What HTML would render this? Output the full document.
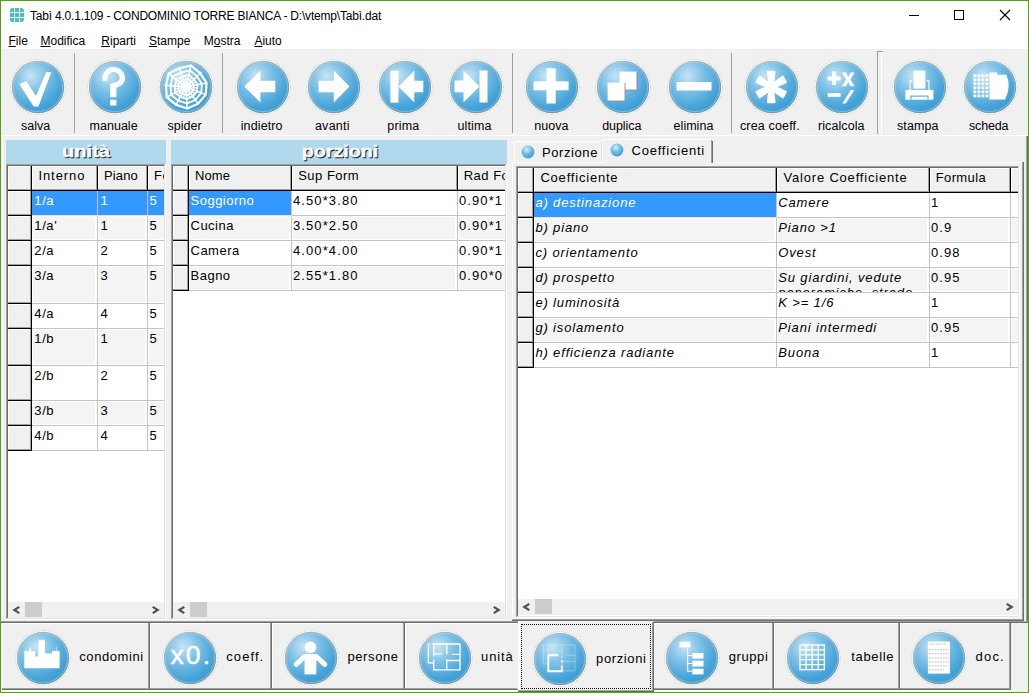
<!DOCTYPE html>
<html><head><meta charset="utf-8"><style>
html,body{margin:0;padding:0}
body{width:1029px;height:693px;position:relative;overflow:hidden;background:#f0f0f0;font-family:"Liberation Sans", sans-serif;color:#000}
.a{position:absolute}
.t{white-space:pre}
</style></head><body>
<div class="a" style="left:0px;top:0px;width:1029px;height:49px;background:#fff"></div><svg class="a" style="left:10px;top:8px" width="14" height="14" viewBox="0 0 14 14">
<rect x="0" y="0" width="14" height="14" rx="3" fill="#4dbcbc"/>
<g stroke="#e6f6f6" stroke-width="1"><line x1="4.5" y1="0" x2="4.5" y2="14"/><line x1="9.5" y1="0" x2="9.5" y2="14"/><line x1="0" y1="4.5" x2="14" y2="4.5"/><line x1="0" y1="9.5" x2="14" y2="9.5"/></g>
</svg><div class="a t" style="left:30.00px;top:9.84px;font-size:12px;line-height:12px;color:#000;;letter-spacing:-0.200px">Tabì 4.0.1.109 - CONDOMINIO TORRE BIANCA - D:\vtemp\Tabì.dat</div><div class="a" style="left:909px;top:15px;width:10px;height:1px;background:#000"></div><div class="a" style="left:954px;top:10px;width:10px;height:10px;border:1px solid #000;box-sizing:border-box"></div><svg class="a" style="left:999px;top:9px" width="12" height="12" viewBox="0 0 12 12"><path d="M1 1L11 11M11 1L1 11" stroke="#000" stroke-width="1.1"/></svg><div class="a t" style="left:8.50px;top:34.84px;font-size:12px;line-height:12px;color:#000;"><u>F</u>ile</div><div class="a t" style="left:40.50px;top:34.84px;font-size:12px;line-height:12px;color:#000;"><u>M</u>odifica</div><div class="a t" style="left:101.30px;top:34.84px;font-size:12px;line-height:12px;color:#000;"><u>R</u>iparti</div><div class="a t" style="left:149.00px;top:34.84px;font-size:12px;line-height:12px;color:#000;"><u>S</u>tampe</div><div class="a t" style="left:203.80px;top:34.84px;font-size:12px;line-height:12px;color:#000;">M<u>o</u>stra</div><div class="a t" style="left:254.40px;top:34.84px;font-size:12px;line-height:12px;color:#000;"><u>A</u>iuto</div><svg width="0" height="0" style="position:absolute"><defs>
<radialGradient id="gb" cx="0.36" cy="0.28" r="0.78">
<stop offset="0" stop-color="#c6e4f4"/><stop offset="0.4" stop-color="#7cc0e6"/><stop offset="0.8" stop-color="#45a3d8"/><stop offset="1" stop-color="#3a9cd4"/>
</radialGradient>
<linearGradient id="gr" x1="0.2" y1="0" x2="0.8" y2="1"><stop offset="0" stop-color="#b8b8b8"/><stop offset="1" stop-color="#8a8a8a"/></linearGradient>
<radialGradient id="gs" cx="0.4" cy="0.3" r="0.7">
<stop offset="0" stop-color="#d6eef9"/><stop offset="0.5" stop-color="#72bde3"/><stop offset="1" stop-color="#3f9fd2"/>
</radialGradient>
</defs></svg><svg class="a" style="left:7.70px;top:57.40px" width="60" height="60" viewBox="-30.0 -30.0 60 60">
<circle r="27.1" fill="none" stroke="#a6dcdf" stroke-width="1.1" stroke-dasharray="1.6 1.4"/>
<circle r="26.3" fill="none" stroke="#fdfefe" stroke-width="1.2"/>
<circle r="25.6" fill="url(#gb)" stroke="url(#gr)" stroke-width="1.1"/>
<circle r="24.6" fill="none" stroke="#a8d6ee" stroke-width="0.9" opacity="0.6"/>
<g fill="#fff"><path d="M-18.7 -3L-11.8 -6.1L-2 9.1L8.2 -15.1L13.4 -15.1L0.4 19.5L-4.4 19.5Z"/></g>
</svg><div class="a t" style="left:-14.40px;width:100px;text-align:center;top:119.92px;font-size:12.5px;line-height:12.5px;color:#000;;letter-spacing:-0.037px">salva</div><svg class="a" style="left:84.60px;top:57.40px" width="60" height="60" viewBox="-30.0 -30.0 60 60">
<circle r="27.1" fill="none" stroke="#a6dcdf" stroke-width="1.1" stroke-dasharray="1.6 1.4"/>
<circle r="26.3" fill="none" stroke="#fdfefe" stroke-width="1.2"/>
<circle r="25.6" fill="url(#gb)" stroke="url(#gr)" stroke-width="1.1"/>
<circle r="24.6" fill="none" stroke="#a8d6ee" stroke-width="0.9" opacity="0.6"/>
<g fill="#fff"><path d="M-12.6 -6.3L-12.6 -8.8A11.3 11.3 0 0 1 10 -8.8C10 -4 7 -1.5 1.4 0.8L1.4 10.2L-4.8 10.2L-4.8 -3.2C0 -4.6 4.7 -5.6 4.7 -8.8A6.15 6.15 0 0 0 -7.6 -8.8L-7.6 -6.3Z"/><rect x="-4.8" y="12.7" width="6.2" height="5.8"/></g>
</svg><div class="a t" style="left:63.60px;width:100px;text-align:center;top:119.92px;font-size:12.5px;line-height:12.5px;color:#000;;letter-spacing:0.007px">manuale</div><svg class="a" style="left:155.60px;top:57.40px" width="60" height="60" viewBox="-30.0 -30.0 60 60">
<circle r="27.1" fill="none" stroke="#a6dcdf" stroke-width="1.1" stroke-dasharray="1.6 1.4"/>
<circle r="26.3" fill="none" stroke="#fdfefe" stroke-width="1.2"/>
<circle r="25.6" fill="url(#gb)" stroke="url(#gr)" stroke-width="1.1"/>
<circle r="24.6" fill="none" stroke="#a8d6ee" stroke-width="0.9" opacity="0.6"/>
<g fill="#fff"><polygon points="20.58,-4.17 19.74,7.68 12.14,16.70 1.23,21.48 -9.99,17.70 -19.30,10.18 -19.98,-1.71 -17.47,-13.47 -6.68,-18.70 5.03,-21.63 14.17,-13.77" fill="none" stroke="#fff" stroke-width="2.2"/><polygon points="15.88,-3.22 15.22,5.93 9.36,12.89 0.95,16.57 -7.71,13.65 -14.89,7.86 -15.41,-1.32 -13.47,-10.39 -5.15,-14.43 3.88,-16.68 10.93,-10.62" fill="none" stroke="#fff" stroke-width="1.8"/><polygon points="11.56,-2.34 11.09,4.32 6.82,9.39 0.69,12.07 -5.61,9.94 -10.84,5.72 -11.23,-0.96 -9.81,-7.57 -3.75,-10.51 2.83,-12.15 7.96,-7.74" fill="none" stroke="#fff" stroke-width="1.8"/><polygon points="7.84,-1.59 7.52,2.93 4.62,6.36 0.47,8.18 -3.81,6.74 -7.35,3.88 -7.61,-0.65 -6.65,-5.13 -2.54,-7.13 1.92,-8.24 5.40,-5.25" fill="none" stroke="#fff" stroke-width="1.8"/><polygon points="4.90,-0.99 4.70,1.83 2.89,3.98 0.29,5.12 -2.38,4.21 -4.59,2.42 -4.76,-0.41 -4.16,-3.21 -1.59,-4.45 1.20,-5.15 3.37,-3.28" fill="none" stroke="#fff" stroke-width="1.8"/><line x1="0" y1="0" x2="21.07" y2="-4.27" stroke="#fff" stroke-width="1.6"/><line x1="0" y1="0" x2="20.04" y2="7.80" stroke="#fff" stroke-width="1.6"/><line x1="0" y1="0" x2="12.64" y2="17.39" stroke="#fff" stroke-width="1.6"/><line x1="0" y1="0" x2="1.23" y2="21.46" stroke="#fff" stroke-width="1.6"/><line x1="0" y1="0" x2="-10.57" y2="18.72" stroke="#fff" stroke-width="1.6"/><line x1="0" y1="0" x2="-19.01" y2="10.03" stroke="#fff" stroke-width="1.6"/><line x1="0" y1="0" x2="-21.42" y2="-1.84" stroke="#fff" stroke-width="1.6"/><line x1="0" y1="0" x2="-17.03" y2="-13.13" stroke="#fff" stroke-width="1.6"/><line x1="0" y1="0" x2="-7.23" y2="-20.25" stroke="#fff" stroke-width="1.6"/><line x1="0" y1="0" x2="4.87" y2="-20.94" stroke="#fff" stroke-width="1.6"/><line x1="0" y1="0" x2="15.42" y2="-14.99" stroke="#fff" stroke-width="1.6"/><circle r="4.5" fill="#fff"/><line x1="6.48" y1="0.56" x2="10.96" y2="0.94" stroke="#fff" stroke-width="1.3"/><line x1="5.15" y1="3.97" x2="8.71" y2="6.72" stroke="#fff" stroke-width="1.3"/><line x1="2.18" y1="6.12" x2="3.70" y2="10.36" stroke="#fff" stroke-width="1.3"/><line x1="-1.47" y1="6.33" x2="-2.49" y2="10.71" stroke="#fff" stroke-width="1.3"/><line x1="-4.66" y1="4.53" x2="-7.89" y2="7.67" stroke="#fff" stroke-width="1.3"/><line x1="-6.37" y1="1.29" x2="-10.78" y2="2.19" stroke="#fff" stroke-width="1.3"/><line x1="-6.06" y1="-2.36" x2="-10.25" y2="-3.99" stroke="#fff" stroke-width="1.3"/><line x1="-3.82" y1="-5.26" x2="-6.47" y2="-8.90" stroke="#fff" stroke-width="1.3"/><line x1="-0.37" y1="-6.49" x2="-0.63" y2="-10.98" stroke="#fff" stroke-width="1.3"/><line x1="3.20" y1="-5.66" x2="5.41" y2="-9.58" stroke="#fff" stroke-width="1.3"/><line x1="5.75" y1="-3.03" x2="9.73" y2="-5.13" stroke="#fff" stroke-width="1.3"/></g>
</svg><div class="a t" style="left:134.60px;width:100px;text-align:center;top:119.92px;font-size:12.5px;line-height:12.5px;color:#000;;letter-spacing:-0.008px">spider</div><svg class="a" style="left:232.50px;top:57.40px" width="60" height="60" viewBox="-30.0 -30.0 60 60">
<circle r="27.1" fill="none" stroke="#a6dcdf" stroke-width="1.1" stroke-dasharray="1.6 1.4"/>
<circle r="26.3" fill="none" stroke="#fdfefe" stroke-width="1.2"/>
<circle r="25.6" fill="url(#gb)" stroke="url(#gr)" stroke-width="1.1"/>
<circle r="24.6" fill="none" stroke="#a8d6ee" stroke-width="0.9" opacity="0.6"/>
<g fill="#fff"><path d="M-18.7 -0.5L-2.6 -16.4L-2.6 -6.3L12.3 -6.3L12.3 5.3L-2.6 5.3L-2.6 15.6Z"/></g>
</svg><div class="a t" style="left:211.70px;width:100px;text-align:center;top:119.92px;font-size:12.5px;line-height:12.5px;color:#000;;letter-spacing:0.125px">indietro</div><svg class="a" style="left:303.60px;top:57.40px" width="60" height="60" viewBox="-30.0 -30.0 60 60">
<circle r="27.1" fill="none" stroke="#a6dcdf" stroke-width="1.1" stroke-dasharray="1.6 1.4"/>
<circle r="26.3" fill="none" stroke="#fdfefe" stroke-width="1.2"/>
<circle r="25.6" fill="url(#gb)" stroke="url(#gr)" stroke-width="1.1"/>
<circle r="24.6" fill="none" stroke="#a8d6ee" stroke-width="0.9" opacity="0.6"/>
<g fill="#fff"><path d="M15.5 -0.5L-0.2 -16.4L-0.2 -6.2L-15.4 -6.2L-15.4 5.3L-0.2 5.3L-0.2 15.6Z"/></g>
</svg><div class="a t" style="left:282.40px;width:100px;text-align:center;top:119.92px;font-size:12.5px;line-height:12.5px;color:#000;;letter-spacing:0.273px">avanti</div><svg class="a" style="left:374.50px;top:57.40px" width="60" height="60" viewBox="-30.0 -30.0 60 60">
<circle r="27.1" fill="none" stroke="#a6dcdf" stroke-width="1.1" stroke-dasharray="1.6 1.4"/>
<circle r="26.3" fill="none" stroke="#fdfefe" stroke-width="1.2"/>
<circle r="25.6" fill="url(#gb)" stroke="url(#gr)" stroke-width="1.1"/>
<circle r="24.6" fill="none" stroke="#a8d6ee" stroke-width="0.9" opacity="0.6"/>
<g fill="#fff"><rect x="-14.6" y="-16.4" width="8.1" height="32"/><path d="M-6.5 -0.5L9.3 -16.4L9.3 -6.3L18.3 -6.3L18.3 5.3L9.3 5.3L9.3 15.6Z"/></g>
</svg><div class="a t" style="left:353.30px;width:100px;text-align:center;top:119.92px;font-size:12.5px;line-height:12.5px;color:#000;;letter-spacing:0.147px">prima</div><svg class="a" style="left:445.60px;top:57.40px" width="60" height="60" viewBox="-30.0 -30.0 60 60">
<circle r="27.1" fill="none" stroke="#a6dcdf" stroke-width="1.1" stroke-dasharray="1.6 1.4"/>
<circle r="26.3" fill="none" stroke="#fdfefe" stroke-width="1.2"/>
<circle r="25.6" fill="url(#gb)" stroke="url(#gr)" stroke-width="1.1"/>
<circle r="24.6" fill="none" stroke="#a8d6ee" stroke-width="0.9" opacity="0.6"/>
<g fill="#fff"><rect x="3.5" y="-16.5" width="8" height="32"/><path d="M3.5 -0.5L-12.5 -16.5L-12.5 -6.4L-21.5 -6.4L-21.5 5.3L-12.5 5.3L-12.5 15.5Z"/></g>
</svg><div class="a t" style="left:424.50px;width:100px;text-align:center;top:119.92px;font-size:12.5px;line-height:12.5px;color:#000;;letter-spacing:0.109px">ultima</div><svg class="a" style="left:522.20px;top:57.40px" width="60" height="60" viewBox="-30.0 -30.0 60 60">
<circle r="27.1" fill="none" stroke="#a6dcdf" stroke-width="1.1" stroke-dasharray="1.6 1.4"/>
<circle r="26.3" fill="none" stroke="#fdfefe" stroke-width="1.2"/>
<circle r="25.6" fill="url(#gb)" stroke="url(#gr)" stroke-width="1.1"/>
<circle r="24.6" fill="none" stroke="#a8d6ee" stroke-width="0.9" opacity="0.6"/>
<g fill="#fff"><rect x="-5.55" y="-18.7" width="9.25" height="35.2"/><rect x="-18.5" y="-5.7" width="35.1" height="9"/></g>
</svg><div class="a t" style="left:501.40px;width:100px;text-align:center;top:119.92px;font-size:12.5px;line-height:12.5px;color:#000;;letter-spacing:0.087px">nuova</div><svg class="a" style="left:593.40px;top:57.40px" width="60" height="60" viewBox="-30.0 -30.0 60 60">
<circle r="27.1" fill="none" stroke="#a6dcdf" stroke-width="1.1" stroke-dasharray="1.6 1.4"/>
<circle r="26.3" fill="none" stroke="#fdfefe" stroke-width="1.2"/>
<circle r="25.6" fill="url(#gb)" stroke="url(#gr)" stroke-width="1.1"/>
<circle r="24.6" fill="none" stroke="#a8d6ee" stroke-width="0.9" opacity="0.6"/>
<g fill="#fff"><rect x="-3" y="-15" width="17.5" height="18.5" fill="#8a8f94"/><rect x="-3.5" y="-15.4" width="17" height="18" fill="#fff"/><rect x="-15" y="-4" width="17.5" height="18.5" fill="#8a8f94"/><rect x="-15.4" y="-4.4" width="17" height="18" fill="#fff"/></g>
</svg><div class="a t" style="left:571.80px;width:100px;text-align:center;top:119.92px;font-size:12.5px;line-height:12.5px;color:#000;;letter-spacing:-0.046px">duplica</div><svg class="a" style="left:664.50px;top:57.40px" width="60" height="60" viewBox="-30.0 -30.0 60 60">
<circle r="27.1" fill="none" stroke="#a6dcdf" stroke-width="1.1" stroke-dasharray="1.6 1.4"/>
<circle r="26.3" fill="none" stroke="#fdfefe" stroke-width="1.2"/>
<circle r="25.6" fill="url(#gb)" stroke="url(#gr)" stroke-width="1.1"/>
<circle r="24.6" fill="none" stroke="#a8d6ee" stroke-width="0.9" opacity="0.6"/>
<g fill="#fff"><rect x="-18.5" y="-5" width="35" height="8.5"/></g>
</svg><div class="a t" style="left:643.50px;width:100px;text-align:center;top:119.92px;font-size:12.5px;line-height:12.5px;color:#000;;letter-spacing:0.027px">elimina</div><svg class="a" style="left:741.50px;top:57.40px" width="60" height="60" viewBox="-30.0 -30.0 60 60">
<circle r="27.1" fill="none" stroke="#a6dcdf" stroke-width="1.1" stroke-dasharray="1.6 1.4"/>
<circle r="26.3" fill="none" stroke="#fdfefe" stroke-width="1.2"/>
<circle r="25.6" fill="url(#gb)" stroke="url(#gr)" stroke-width="1.1"/>
<circle r="24.6" fill="none" stroke="#a8d6ee" stroke-width="0.9" opacity="0.6"/>
<g fill="#fff"><g transform="translate(-0.8 0)"><path transform="rotate(90)" d="M0 -2.6L15.2 -4.3Q16.2 -4 16.2 -3L16.2 3Q16.2 4 15.2 4.3L0 2.6Z"/><path transform="rotate(150)" d="M0 -2.6L15.2 -4.3Q16.2 -4 16.2 -3L16.2 3Q16.2 4 15.2 4.3L0 2.6Z"/><path transform="rotate(210)" d="M0 -2.6L15.2 -4.3Q16.2 -4 16.2 -3L16.2 3Q16.2 4 15.2 4.3L0 2.6Z"/><path transform="rotate(270)" d="M0 -2.6L15.2 -4.3Q16.2 -4 16.2 -3L16.2 3Q16.2 4 15.2 4.3L0 2.6Z"/><path transform="rotate(330)" d="M0 -2.6L15.2 -4.3Q16.2 -4 16.2 -3L16.2 3Q16.2 4 15.2 4.3L0 2.6Z"/><path transform="rotate(390)" d="M0 -2.6L15.2 -4.3Q16.2 -4 16.2 -3L16.2 3Q16.2 4 15.2 4.3L0 2.6Z"/><circle r="4.5"/></g></g>
</svg><div class="a t" style="left:719.90px;width:100px;text-align:center;top:119.92px;font-size:12.5px;line-height:12.5px;color:#000;;letter-spacing:0.169px">crea coeff.</div><svg class="a" style="left:812.40px;top:57.40px" width="60" height="60" viewBox="-30.0 -30.0 60 60">
<circle r="27.1" fill="none" stroke="#a6dcdf" stroke-width="1.1" stroke-dasharray="1.6 1.4"/>
<circle r="26.3" fill="none" stroke="#fdfefe" stroke-width="1.2"/>
<circle r="25.6" fill="url(#gb)" stroke="url(#gr)" stroke-width="1.1"/>
<circle r="24.6" fill="none" stroke="#a8d6ee" stroke-width="0.9" opacity="0.6"/>
<g fill="#fff"><rect x="-14.4" y="-10.5" width="13" height="4"/><rect x="-9.9" y="-15.6" width="4" height="13.6"/><path d="M-0.2 -14.4H4L6.2 -10.3L8.4 -14.4H12.6L8.4 -7.6L12.6 -0.8H8.2L6.2 -4.9L4 -0.8H-0.2L4 -7.6Z"/><rect x="-14.4" y="6.2" width="13" height="3.6"/><path d="M8.8 2.9H12.3L3.7 16.4H0.2Z"/></g>
</svg><div class="a t" style="left:791.30px;width:100px;text-align:center;top:119.92px;font-size:12.5px;line-height:12.5px;color:#000;;letter-spacing:0.082px">ricalcola</div><svg class="a" style="left:889.60px;top:57.40px" width="60" height="60" viewBox="-30.0 -30.0 60 60">
<circle r="27.1" fill="none" stroke="#a6dcdf" stroke-width="1.1" stroke-dasharray="1.6 1.4"/>
<circle r="26.3" fill="none" stroke="#fdfefe" stroke-width="1.2"/>
<circle r="25.6" fill="url(#gb)" stroke="url(#gr)" stroke-width="1.1"/>
<circle r="24.6" fill="none" stroke="#a8d6ee" stroke-width="0.9" opacity="0.6"/>
<g fill="#fff"><rect x="-6.5" y="-16.4" width="11.9" height="18"/><path d="M-10.5 -6.7H-7.6V-5.6H-9.4V2.9H-10.5Z"/><path d="M9.5 -6.7H6.6V-5.6H8.4V2.9H9.5Z"/><path d="M-14.6 2.9H13.4V12.7H-14.6Z"/><rect x="-9.5" y="8.6" width="17.5" height="1" fill="#4aa3d6"/><rect x="-9.5" y="8.6" width="1" height="4" fill="#4aa3d6"/><rect x="7.5" y="8.6" width="1" height="4" fill="#4aa3d6"/></g>
</svg><div class="a t" style="left:867.80px;width:100px;text-align:center;top:119.92px;font-size:12.5px;line-height:12.5px;color:#000;;letter-spacing:0.117px">stampa</div><svg class="a" style="left:960.40px;top:57.40px" width="60" height="60" viewBox="-30.0 -30.0 60 60">
<circle r="27.1" fill="none" stroke="#a6dcdf" stroke-width="1.1" stroke-dasharray="1.6 1.4"/>
<circle r="26.3" fill="none" stroke="#fdfefe" stroke-width="1.2"/>
<circle r="25.6" fill="url(#gb)" stroke="url(#gr)" stroke-width="1.1"/>
<circle r="24.6" fill="none" stroke="#a8d6ee" stroke-width="0.9" opacity="0.6"/>
<g fill="#fff"><g><rect x="-16.60" y="-12.70" width="2.9" height="2.9"/><rect x="-16.60" y="-8.67" width="2.9" height="2.9"/><rect x="-16.60" y="-4.64" width="2.9" height="2.9"/><rect x="-16.60" y="-0.61" width="2.9" height="2.9"/><rect x="-16.60" y="3.42" width="2.9" height="2.9"/><rect x="-16.60" y="7.45" width="2.9" height="2.9"/><rect x="-12.57" y="-12.70" width="2.9" height="2.9"/><rect x="-12.57" y="-8.67" width="2.9" height="2.9"/><rect x="-12.57" y="-4.64" width="2.9" height="2.9"/><rect x="-12.57" y="-0.61" width="2.9" height="2.9"/><rect x="-12.57" y="3.42" width="2.9" height="2.9"/><rect x="-12.57" y="7.45" width="2.9" height="2.9"/><rect x="-8.54" y="-12.70" width="2.9" height="2.9"/><rect x="-8.54" y="-8.67" width="2.9" height="2.9"/><rect x="-8.54" y="-4.64" width="2.9" height="2.9"/><rect x="-8.54" y="-0.61" width="2.9" height="2.9"/><rect x="-8.54" y="3.42" width="2.9" height="2.9"/><rect x="-8.54" y="7.45" width="2.9" height="2.9"/><rect x="-4.51" y="-12.70" width="2.9" height="2.9"/><rect x="-4.51" y="-8.67" width="2.9" height="2.9"/><rect x="-4.51" y="-4.64" width="2.9" height="2.9"/><rect x="-4.51" y="-0.61" width="2.9" height="2.9"/><rect x="-4.51" y="3.42" width="2.9" height="2.9"/><rect x="-4.51" y="7.45" width="2.9" height="2.9"/></g><path d="M-0.6 -14.4H7.4V-12.3H16.3Q21.5 -1 15.1 12.6H-0.6Z"/></g>
</svg><div class="a t" style="left:938.70px;width:100px;text-align:center;top:119.92px;font-size:12.5px;line-height:12.5px;color:#000;;letter-spacing:-0.135px">scheda</div><div class="a" style="left:74px;top:53px;width:1px;height:80px;background:#a0a0a0"></div><div class="a" style="left:222px;top:53px;width:1px;height:80px;background:#a0a0a0"></div><div class="a" style="left:512px;top:53px;width:1px;height:80px;background:#a0a0a0"></div><div class="a" style="left:731px;top:53px;width:1px;height:80px;background:#a0a0a0"></div><div class="a" style="left:877px;top:51px;width:1px;height:83px;background:#a0a0a0"></div><div class="a" style="left:877px;top:51px;width:6px;height:1px;background:#a0a0a0"></div><div class="a" style="left:881px;top:52px;width:1px;height:82px;background:#fff"></div><div class="a" style="left:1px;top:135px;width:1027px;height:1px;background:#fff"></div><div class="a" style="left:1027px;top:136px;width:1px;height:487px;background:#6e6e6e"></div><div class="a" style="left:1026px;top:136px;width:1px;height:487px;background:#a0a0a0"></div><div class="a" style="left:1px;top:621px;width:1027px;height:1px;background:#a0a0a0"></div><div class="a" style="left:1px;top:622px;width:1027px;height:1px;background:#6e6e6e"></div><div class="a" style="left:2px;top:136px;width:1px;height:485px;background:#fff"></div><div class="a" style="left:6px;top:140px;width:160px;height:24px;background:#b0d9ee"></div><div class="a t" style="left:-12.799999999999997px;width:200px;text-align:center;top:143.53px;font-size:16.5px;line-height:16.5px;font-weight:bold;color:#1a1a1a;-webkit-text-stroke:0.35px #1a1a1a;transform:scaleX(1.218);transform-origin:100px 0">unità</div><div class="a t" style="left:-13.799999999999997px;width:200px;text-align:center;top:142.53px;font-size:16.5px;line-height:16.5px;font-weight:bold;color:#fff;-webkit-text-stroke:0.35px #fff;transform:scaleX(1.218);transform-origin:100px 0">unità</div><div class="a" style="left:6px;top:164px;width:160px;height:1px;background:#a0a0a0"></div><div class="a" style="left:7px;top:165px;width:158px;height:1px;background:#6e6e6e"></div><div class="a" style="left:6px;top:164px;width:1px;height:456px;background:#a0a0a0"></div><div class="a" style="left:7px;top:165px;width:1px;height:454px;background:#6e6e6e"></div><div class="a" style="left:6px;top:619px;width:160px;height:1px;background:#fff"></div><div class="a" style="left:7px;top:618px;width:158px;height:1px;background:#e3e3e3"></div><div class="a" style="left:165px;top:164px;width:1px;height:456px;background:#fff"></div><div class="a" style="left:164px;top:165px;width:1px;height:454px;background:#e3e3e3"></div><div class="a" style="left:8px;top:166px;width:156px;height:452px;overflow:hidden"><div class="a" style="left:-8px;top:-166px;width:1029px;height:693px"><div class="a" style="left:8px;top:166px;width:156px;height:452px;background:#fff"></div><div class="a" style="left:8px;top:166px;width:23px;height:24px;background:#f0f0f0"></div><div class="a" style="left:8px;top:166px;width:23px;height:1px;background:#fff"></div><div class="a" style="left:8px;top:166px;width:1px;height:24px;background:#fff"></div><div class="a" style="left:8px;top:189px;width:23px;height:1px;background:#a0a0a0"></div><div class="a" style="left:30px;top:166px;width:1px;height:24px;background:#a0a0a0"></div><div class="a" style="left:8px;top:190px;width:24px;height:1px;background:#000"></div><div class="a" style="left:31px;top:166px;width:1px;height:25px;background:#000"></div><div class="a" style="left:32px;top:166px;width:65px;height:24px;background:#f0f0f0"></div><div class="a" style="left:32px;top:166px;width:65px;height:1px;background:#fff"></div><div class="a" style="left:32px;top:166px;width:1px;height:24px;background:#fff"></div><div class="a" style="left:32px;top:189px;width:65px;height:1px;background:#a0a0a0"></div><div class="a" style="left:96px;top:166px;width:1px;height:24px;background:#a0a0a0"></div><div class="a" style="left:32px;top:190px;width:66px;height:1px;background:#000"></div><div class="a" style="left:97px;top:166px;width:1px;height:25px;background:#000"></div><div class="a" style="left:98px;top:166px;width:49px;height:24px;background:#f0f0f0"></div><div class="a" style="left:98px;top:166px;width:49px;height:1px;background:#fff"></div><div class="a" style="left:98px;top:166px;width:1px;height:24px;background:#fff"></div><div class="a" style="left:98px;top:189px;width:49px;height:1px;background:#a0a0a0"></div><div class="a" style="left:146px;top:166px;width:1px;height:24px;background:#a0a0a0"></div><div class="a" style="left:98px;top:190px;width:50px;height:1px;background:#000"></div><div class="a" style="left:147px;top:166px;width:1px;height:25px;background:#000"></div><div class="a" style="left:148px;top:166px;width:39px;height:24px;background:#f0f0f0"></div><div class="a" style="left:148px;top:166px;width:39px;height:1px;background:#fff"></div><div class="a" style="left:148px;top:166px;width:1px;height:24px;background:#fff"></div><div class="a" style="left:148px;top:189px;width:39px;height:1px;background:#a0a0a0"></div><div class="a" style="left:186px;top:166px;width:1px;height:24px;background:#a0a0a0"></div><div class="a" style="left:148px;top:190px;width:40px;height:1px;background:#000"></div><div class="a" style="left:187px;top:166px;width:1px;height:25px;background:#000"></div><div class="a" style="left:8px;top:191px;width:23px;height:24px;background:#f0f0f0"></div><div class="a" style="left:8px;top:191px;width:23px;height:1px;background:#fff"></div><div class="a" style="left:8px;top:191px;width:1px;height:24px;background:#fff"></div><div class="a" style="left:8px;top:214px;width:23px;height:1px;background:#a0a0a0"></div><div class="a" style="left:30px;top:191px;width:1px;height:24px;background:#a0a0a0"></div><div class="a" style="left:8px;top:215px;width:24px;height:1px;background:#000"></div><div class="a" style="left:31px;top:191px;width:1px;height:25px;background:#000"></div><div class="a" style="left:32px;top:191px;width:65px;height:24px;background:#3399ff"></div><div class="a" style="left:97px;top:191px;width:1px;height:25px;background:#c4c4c4"></div><div class="a" style="left:32px;top:215px;width:66px;height:1px;background:#e6e3e0"></div><div class="a" style="left:98px;top:191px;width:49px;height:24px;background:#3399ff"></div><div class="a" style="left:147px;top:191px;width:1px;height:25px;background:#c4c4c4"></div><div class="a" style="left:98px;top:215px;width:50px;height:1px;background:#e6e3e0"></div><div class="a" style="left:148px;top:191px;width:39px;height:24px;background:#3399ff"></div><div class="a" style="left:187px;top:191px;width:1px;height:25px;background:#c4c4c4"></div><div class="a" style="left:148px;top:215px;width:40px;height:1px;background:#e6e3e0"></div><div class="a" style="left:8px;top:216px;width:23px;height:24px;background:#f0f0f0"></div><div class="a" style="left:8px;top:216px;width:23px;height:1px;background:#fff"></div><div class="a" style="left:8px;top:216px;width:1px;height:24px;background:#fff"></div><div class="a" style="left:8px;top:239px;width:23px;height:1px;background:#a0a0a0"></div><div class="a" style="left:30px;top:216px;width:1px;height:24px;background:#a0a0a0"></div><div class="a" style="left:8px;top:240px;width:24px;height:1px;background:#000"></div><div class="a" style="left:31px;top:216px;width:1px;height:25px;background:#000"></div><div class="a" style="left:33px;top:217px;width:62px;height:22px;background:#f4f4f4"></div><div class="a" style="left:97px;top:216px;width:1px;height:25px;background:#c4c4c4"></div><div class="a" style="left:32px;top:240px;width:66px;height:1px;background:#c4c4c4"></div><div class="a" style="left:99px;top:217px;width:46px;height:22px;background:#f4f4f4"></div><div class="a" style="left:147px;top:216px;width:1px;height:25px;background:#c4c4c4"></div><div class="a" style="left:98px;top:240px;width:50px;height:1px;background:#c4c4c4"></div><div class="a" style="left:149px;top:217px;width:36px;height:22px;background:#f4f4f4"></div><div class="a" style="left:187px;top:216px;width:1px;height:25px;background:#c4c4c4"></div><div class="a" style="left:148px;top:240px;width:40px;height:1px;background:#c4c4c4"></div><div class="a" style="left:8px;top:241px;width:23px;height:24px;background:#f0f0f0"></div><div class="a" style="left:8px;top:241px;width:23px;height:1px;background:#fff"></div><div class="a" style="left:8px;top:241px;width:1px;height:24px;background:#fff"></div><div class="a" style="left:8px;top:264px;width:23px;height:1px;background:#a0a0a0"></div><div class="a" style="left:30px;top:241px;width:1px;height:24px;background:#a0a0a0"></div><div class="a" style="left:8px;top:265px;width:24px;height:1px;background:#000"></div><div class="a" style="left:31px;top:241px;width:1px;height:25px;background:#000"></div><div class="a" style="left:97px;top:241px;width:1px;height:25px;background:#c4c4c4"></div><div class="a" style="left:32px;top:265px;width:66px;height:1px;background:#c4c4c4"></div><div class="a" style="left:147px;top:241px;width:1px;height:25px;background:#c4c4c4"></div><div class="a" style="left:98px;top:265px;width:50px;height:1px;background:#c4c4c4"></div><div class="a" style="left:187px;top:241px;width:1px;height:25px;background:#c4c4c4"></div><div class="a" style="left:148px;top:265px;width:40px;height:1px;background:#c4c4c4"></div><div class="a" style="left:8px;top:266px;width:23px;height:37px;background:#f0f0f0"></div><div class="a" style="left:8px;top:266px;width:23px;height:1px;background:#fff"></div><div class="a" style="left:8px;top:266px;width:1px;height:37px;background:#fff"></div><div class="a" style="left:8px;top:302px;width:23px;height:1px;background:#a0a0a0"></div><div class="a" style="left:30px;top:266px;width:1px;height:37px;background:#a0a0a0"></div><div class="a" style="left:8px;top:303px;width:24px;height:1px;background:#000"></div><div class="a" style="left:31px;top:266px;width:1px;height:38px;background:#000"></div><div class="a" style="left:33px;top:267px;width:62px;height:35px;background:#f4f4f4"></div><div class="a" style="left:97px;top:266px;width:1px;height:38px;background:#c4c4c4"></div><div class="a" style="left:32px;top:303px;width:66px;height:1px;background:#c4c4c4"></div><div class="a" style="left:99px;top:267px;width:46px;height:35px;background:#f4f4f4"></div><div class="a" style="left:147px;top:266px;width:1px;height:38px;background:#c4c4c4"></div><div class="a" style="left:98px;top:303px;width:50px;height:1px;background:#c4c4c4"></div><div class="a" style="left:149px;top:267px;width:36px;height:35px;background:#f4f4f4"></div><div class="a" style="left:187px;top:266px;width:1px;height:38px;background:#c4c4c4"></div><div class="a" style="left:148px;top:303px;width:40px;height:1px;background:#c4c4c4"></div><div class="a" style="left:8px;top:304px;width:23px;height:24px;background:#f0f0f0"></div><div class="a" style="left:8px;top:304px;width:23px;height:1px;background:#fff"></div><div class="a" style="left:8px;top:304px;width:1px;height:24px;background:#fff"></div><div class="a" style="left:8px;top:327px;width:23px;height:1px;background:#a0a0a0"></div><div class="a" style="left:30px;top:304px;width:1px;height:24px;background:#a0a0a0"></div><div class="a" style="left:8px;top:328px;width:24px;height:1px;background:#000"></div><div class="a" style="left:31px;top:304px;width:1px;height:25px;background:#000"></div><div class="a" style="left:97px;top:304px;width:1px;height:25px;background:#c4c4c4"></div><div class="a" style="left:32px;top:328px;width:66px;height:1px;background:#c4c4c4"></div><div class="a" style="left:147px;top:304px;width:1px;height:25px;background:#c4c4c4"></div><div class="a" style="left:98px;top:328px;width:50px;height:1px;background:#c4c4c4"></div><div class="a" style="left:187px;top:304px;width:1px;height:25px;background:#c4c4c4"></div><div class="a" style="left:148px;top:328px;width:40px;height:1px;background:#c4c4c4"></div><div class="a" style="left:8px;top:329px;width:23px;height:36px;background:#f0f0f0"></div><div class="a" style="left:8px;top:329px;width:23px;height:1px;background:#fff"></div><div class="a" style="left:8px;top:329px;width:1px;height:36px;background:#fff"></div><div class="a" style="left:8px;top:364px;width:23px;height:1px;background:#a0a0a0"></div><div class="a" style="left:30px;top:329px;width:1px;height:36px;background:#a0a0a0"></div><div class="a" style="left:8px;top:365px;width:24px;height:1px;background:#000"></div><div class="a" style="left:31px;top:329px;width:1px;height:37px;background:#000"></div><div class="a" style="left:33px;top:330px;width:62px;height:34px;background:#f4f4f4"></div><div class="a" style="left:97px;top:329px;width:1px;height:37px;background:#c4c4c4"></div><div class="a" style="left:32px;top:365px;width:66px;height:1px;background:#c4c4c4"></div><div class="a" style="left:99px;top:330px;width:46px;height:34px;background:#f4f4f4"></div><div class="a" style="left:147px;top:329px;width:1px;height:37px;background:#c4c4c4"></div><div class="a" style="left:98px;top:365px;width:50px;height:1px;background:#c4c4c4"></div><div class="a" style="left:149px;top:330px;width:36px;height:34px;background:#f4f4f4"></div><div class="a" style="left:187px;top:329px;width:1px;height:37px;background:#c4c4c4"></div><div class="a" style="left:148px;top:365px;width:40px;height:1px;background:#c4c4c4"></div><div class="a" style="left:8px;top:366px;width:23px;height:34px;background:#f0f0f0"></div><div class="a" style="left:8px;top:366px;width:23px;height:1px;background:#fff"></div><div class="a" style="left:8px;top:366px;width:1px;height:34px;background:#fff"></div><div class="a" style="left:8px;top:399px;width:23px;height:1px;background:#a0a0a0"></div><div class="a" style="left:30px;top:366px;width:1px;height:34px;background:#a0a0a0"></div><div class="a" style="left:8px;top:400px;width:24px;height:1px;background:#000"></div><div class="a" style="left:31px;top:366px;width:1px;height:35px;background:#000"></div><div class="a" style="left:97px;top:366px;width:1px;height:35px;background:#c4c4c4"></div><div class="a" style="left:32px;top:400px;width:66px;height:1px;background:#c4c4c4"></div><div class="a" style="left:147px;top:366px;width:1px;height:35px;background:#c4c4c4"></div><div class="a" style="left:98px;top:400px;width:50px;height:1px;background:#c4c4c4"></div><div class="a" style="left:187px;top:366px;width:1px;height:35px;background:#c4c4c4"></div><div class="a" style="left:148px;top:400px;width:40px;height:1px;background:#c4c4c4"></div><div class="a" style="left:8px;top:401px;width:23px;height:24px;background:#f0f0f0"></div><div class="a" style="left:8px;top:401px;width:23px;height:1px;background:#fff"></div><div class="a" style="left:8px;top:401px;width:1px;height:24px;background:#fff"></div><div class="a" style="left:8px;top:424px;width:23px;height:1px;background:#a0a0a0"></div><div class="a" style="left:30px;top:401px;width:1px;height:24px;background:#a0a0a0"></div><div class="a" style="left:8px;top:425px;width:24px;height:1px;background:#000"></div><div class="a" style="left:31px;top:401px;width:1px;height:25px;background:#000"></div><div class="a" style="left:33px;top:402px;width:62px;height:22px;background:#f4f4f4"></div><div class="a" style="left:97px;top:401px;width:1px;height:25px;background:#c4c4c4"></div><div class="a" style="left:32px;top:425px;width:66px;height:1px;background:#c4c4c4"></div><div class="a" style="left:99px;top:402px;width:46px;height:22px;background:#f4f4f4"></div><div class="a" style="left:147px;top:401px;width:1px;height:25px;background:#c4c4c4"></div><div class="a" style="left:98px;top:425px;width:50px;height:1px;background:#c4c4c4"></div><div class="a" style="left:149px;top:402px;width:36px;height:22px;background:#f4f4f4"></div><div class="a" style="left:187px;top:401px;width:1px;height:25px;background:#c4c4c4"></div><div class="a" style="left:148px;top:425px;width:40px;height:1px;background:#c4c4c4"></div><div class="a" style="left:8px;top:426px;width:23px;height:24px;background:#f0f0f0"></div><div class="a" style="left:8px;top:426px;width:23px;height:1px;background:#fff"></div><div class="a" style="left:8px;top:426px;width:1px;height:24px;background:#fff"></div><div class="a" style="left:8px;top:449px;width:23px;height:1px;background:#a0a0a0"></div><div class="a" style="left:30px;top:426px;width:1px;height:24px;background:#a0a0a0"></div><div class="a" style="left:8px;top:450px;width:24px;height:1px;background:#000"></div><div class="a" style="left:31px;top:426px;width:1px;height:25px;background:#000"></div><div class="a" style="left:97px;top:426px;width:1px;height:25px;background:#c4c4c4"></div><div class="a" style="left:32px;top:450px;width:66px;height:1px;background:#c4c4c4"></div><div class="a" style="left:147px;top:426px;width:1px;height:25px;background:#c4c4c4"></div><div class="a" style="left:98px;top:450px;width:50px;height:1px;background:#c4c4c4"></div><div class="a" style="left:187px;top:426px;width:1px;height:25px;background:#c4c4c4"></div><div class="a" style="left:148px;top:450px;width:40px;height:1px;background:#c4c4c4"></div><div class="a t" style="left:38.40px;top:169.00px;font-size:13px;line-height:13px;color:#000;;letter-spacing:0.931px">Interno</div><div class="a t" style="left:104.00px;top:169.00px;font-size:13px;line-height:13px;color:#000;;letter-spacing:0.150px">Piano</div><div class="a t" style="left:154.00px;top:169.00px;font-size:13px;line-height:13px;color:#000;letter-spacing:0.6px">Fo</div><div class="a t" style="left:34.30px;top:194.00px;font-size:13px;line-height:13px;color:#fff;letter-spacing:0.6px">1/a</div><div class="a t" style="left:100.50px;top:194.00px;font-size:13px;line-height:13px;color:#fff;">1</div><div class="a t" style="left:149.50px;top:194.00px;font-size:13px;line-height:13px;color:#fff;">5</div><div class="a t" style="left:34.30px;top:219.00px;font-size:13px;line-height:13px;color:#000;letter-spacing:0.6px">1/a'</div><div class="a t" style="left:100.50px;top:219.00px;font-size:13px;line-height:13px;color:#000;">1</div><div class="a t" style="left:149.50px;top:219.00px;font-size:13px;line-height:13px;color:#000;">5</div><div class="a t" style="left:34.30px;top:244.00px;font-size:13px;line-height:13px;color:#000;letter-spacing:0.6px">2/a</div><div class="a t" style="left:100.50px;top:244.00px;font-size:13px;line-height:13px;color:#000;">2</div><div class="a t" style="left:149.50px;top:244.00px;font-size:13px;line-height:13px;color:#000;">5</div><div class="a t" style="left:34.30px;top:269.00px;font-size:13px;line-height:13px;color:#000;letter-spacing:0.6px">3/a</div><div class="a t" style="left:100.50px;top:269.00px;font-size:13px;line-height:13px;color:#000;">3</div><div class="a t" style="left:149.50px;top:269.00px;font-size:13px;line-height:13px;color:#000;">5</div><div class="a t" style="left:34.30px;top:307.00px;font-size:13px;line-height:13px;color:#000;letter-spacing:0.6px">4/a</div><div class="a t" style="left:100.50px;top:307.00px;font-size:13px;line-height:13px;color:#000;">4</div><div class="a t" style="left:149.50px;top:307.00px;font-size:13px;line-height:13px;color:#000;">5</div><div class="a t" style="left:34.30px;top:332.00px;font-size:13px;line-height:13px;color:#000;letter-spacing:0.6px">1/b</div><div class="a t" style="left:100.50px;top:332.00px;font-size:13px;line-height:13px;color:#000;">1</div><div class="a t" style="left:149.50px;top:332.00px;font-size:13px;line-height:13px;color:#000;">5</div><div class="a t" style="left:34.30px;top:369.00px;font-size:13px;line-height:13px;color:#000;letter-spacing:0.6px">2/b</div><div class="a t" style="left:100.50px;top:369.00px;font-size:13px;line-height:13px;color:#000;">2</div><div class="a t" style="left:149.50px;top:369.00px;font-size:13px;line-height:13px;color:#000;">5</div><div class="a t" style="left:34.30px;top:404.00px;font-size:13px;line-height:13px;color:#000;letter-spacing:0.6px">3/b</div><div class="a t" style="left:100.50px;top:404.00px;font-size:13px;line-height:13px;color:#000;">3</div><div class="a t" style="left:149.50px;top:404.00px;font-size:13px;line-height:13px;color:#000;">5</div><div class="a t" style="left:34.30px;top:429.00px;font-size:13px;line-height:13px;color:#000;letter-spacing:0.6px">4/b</div><div class="a t" style="left:100.50px;top:429.00px;font-size:13px;line-height:13px;color:#000;">4</div><div class="a t" style="left:149.50px;top:429.00px;font-size:13px;line-height:13px;color:#000;">5</div><div class="a" style="left:8px;top:602px;width:156px;height:16px;background:#f0f0f0"></div><div class="a" style="left:25px;top:602px;width:17px;height:15px;background:#cdcdcd"></div><svg class="a" style="left:11px;top:605px" width="10" height="10" viewBox="0 0 10 10"><path d="M8.3 1.8L3.2 5L8.3 8.2" fill="none" stroke="#505050" stroke-width="2.1"/></svg><svg class="a" style="left:151px;top:605px" width="10" height="10" viewBox="0 0 10 10"><path d="M1.7 1.8L6.8 5L1.7 8.2" fill="none" stroke="#505050" stroke-width="2.1"/></svg></div></div><div class="a" style="left:171px;top:140px;width:336px;height:24px;background:#b0d9ee"></div><div class="a t" style="left:240.89999999999998px;width:200px;text-align:center;top:143.53px;font-size:16.5px;line-height:16.5px;font-weight:bold;color:#1a1a1a;-webkit-text-stroke:0.35px #1a1a1a;transform:scaleX(1.192);transform-origin:100px 0">porzioni</div><div class="a t" style="left:239.89999999999998px;width:200px;text-align:center;top:142.53px;font-size:16.5px;line-height:16.5px;font-weight:bold;color:#fff;-webkit-text-stroke:0.35px #fff;transform:scaleX(1.192);transform-origin:100px 0">porzioni</div><div class="a" style="left:171px;top:164px;width:336px;height:1px;background:#a0a0a0"></div><div class="a" style="left:172px;top:165px;width:334px;height:1px;background:#6e6e6e"></div><div class="a" style="left:171px;top:164px;width:1px;height:456px;background:#a0a0a0"></div><div class="a" style="left:172px;top:165px;width:1px;height:454px;background:#6e6e6e"></div><div class="a" style="left:171px;top:619px;width:336px;height:1px;background:#fff"></div><div class="a" style="left:172px;top:618px;width:334px;height:1px;background:#e3e3e3"></div><div class="a" style="left:506px;top:164px;width:1px;height:456px;background:#fff"></div><div class="a" style="left:505px;top:165px;width:1px;height:454px;background:#e3e3e3"></div><div class="a" style="left:173px;top:166px;width:332px;height:452px;overflow:hidden"><div class="a" style="left:-173px;top:-166px;width:1029px;height:693px"><div class="a" style="left:173px;top:166px;width:332px;height:452px;background:#fff"></div><div class="a" style="left:173px;top:166px;width:15px;height:24px;background:#f0f0f0"></div><div class="a" style="left:173px;top:166px;width:15px;height:1px;background:#fff"></div><div class="a" style="left:173px;top:166px;width:1px;height:24px;background:#fff"></div><div class="a" style="left:173px;top:189px;width:15px;height:1px;background:#a0a0a0"></div><div class="a" style="left:187px;top:166px;width:1px;height:24px;background:#a0a0a0"></div><div class="a" style="left:173px;top:190px;width:16px;height:1px;background:#000"></div><div class="a" style="left:188px;top:166px;width:1px;height:25px;background:#000"></div><div class="a" style="left:189px;top:166px;width:102px;height:24px;background:#f0f0f0"></div><div class="a" style="left:189px;top:166px;width:102px;height:1px;background:#fff"></div><div class="a" style="left:189px;top:166px;width:1px;height:24px;background:#fff"></div><div class="a" style="left:189px;top:189px;width:102px;height:1px;background:#a0a0a0"></div><div class="a" style="left:290px;top:166px;width:1px;height:24px;background:#a0a0a0"></div><div class="a" style="left:189px;top:190px;width:103px;height:1px;background:#000"></div><div class="a" style="left:291px;top:166px;width:1px;height:25px;background:#000"></div><div class="a" style="left:292px;top:166px;width:165px;height:24px;background:#f0f0f0"></div><div class="a" style="left:292px;top:166px;width:165px;height:1px;background:#fff"></div><div class="a" style="left:292px;top:166px;width:1px;height:24px;background:#fff"></div><div class="a" style="left:292px;top:189px;width:165px;height:1px;background:#a0a0a0"></div><div class="a" style="left:456px;top:166px;width:1px;height:24px;background:#a0a0a0"></div><div class="a" style="left:292px;top:190px;width:166px;height:1px;background:#000"></div><div class="a" style="left:457px;top:166px;width:1px;height:25px;background:#000"></div><div class="a" style="left:458px;top:166px;width:59px;height:24px;background:#f0f0f0"></div><div class="a" style="left:458px;top:166px;width:59px;height:1px;background:#fff"></div><div class="a" style="left:458px;top:166px;width:1px;height:24px;background:#fff"></div><div class="a" style="left:458px;top:189px;width:59px;height:1px;background:#a0a0a0"></div><div class="a" style="left:516px;top:166px;width:1px;height:24px;background:#a0a0a0"></div><div class="a" style="left:458px;top:190px;width:60px;height:1px;background:#000"></div><div class="a" style="left:517px;top:166px;width:1px;height:25px;background:#000"></div><div class="a" style="left:173px;top:191px;width:15px;height:24px;background:#f0f0f0"></div><div class="a" style="left:173px;top:191px;width:15px;height:1px;background:#fff"></div><div class="a" style="left:173px;top:191px;width:1px;height:24px;background:#fff"></div><div class="a" style="left:173px;top:214px;width:15px;height:1px;background:#a0a0a0"></div><div class="a" style="left:187px;top:191px;width:1px;height:24px;background:#a0a0a0"></div><div class="a" style="left:173px;top:215px;width:16px;height:1px;background:#000"></div><div class="a" style="left:188px;top:191px;width:1px;height:25px;background:#000"></div><div class="a" style="left:189px;top:191px;width:102px;height:24px;background:#3399ff"></div><div class="a" style="left:291px;top:191px;width:1px;height:25px;background:#c4c4c4"></div><div class="a" style="left:189px;top:215px;width:103px;height:1px;background:#e6e3e0"></div><div class="a" style="left:457px;top:191px;width:1px;height:25px;background:#c4c4c4"></div><div class="a" style="left:292px;top:215px;width:166px;height:1px;background:#c4c4c4"></div><div class="a" style="left:517px;top:191px;width:1px;height:25px;background:#c4c4c4"></div><div class="a" style="left:458px;top:215px;width:60px;height:1px;background:#c4c4c4"></div><div class="a" style="left:173px;top:216px;width:15px;height:24px;background:#f0f0f0"></div><div class="a" style="left:173px;top:216px;width:15px;height:1px;background:#fff"></div><div class="a" style="left:173px;top:216px;width:1px;height:24px;background:#fff"></div><div class="a" style="left:173px;top:239px;width:15px;height:1px;background:#a0a0a0"></div><div class="a" style="left:187px;top:216px;width:1px;height:24px;background:#a0a0a0"></div><div class="a" style="left:173px;top:240px;width:16px;height:1px;background:#000"></div><div class="a" style="left:188px;top:216px;width:1px;height:25px;background:#000"></div><div class="a" style="left:190px;top:217px;width:99px;height:22px;background:#f4f4f4"></div><div class="a" style="left:291px;top:216px;width:1px;height:25px;background:#c4c4c4"></div><div class="a" style="left:189px;top:240px;width:103px;height:1px;background:#c4c4c4"></div><div class="a" style="left:293px;top:217px;width:162px;height:22px;background:#f4f4f4"></div><div class="a" style="left:457px;top:216px;width:1px;height:25px;background:#c4c4c4"></div><div class="a" style="left:292px;top:240px;width:166px;height:1px;background:#c4c4c4"></div><div class="a" style="left:459px;top:217px;width:56px;height:22px;background:#f4f4f4"></div><div class="a" style="left:517px;top:216px;width:1px;height:25px;background:#c4c4c4"></div><div class="a" style="left:458px;top:240px;width:60px;height:1px;background:#c4c4c4"></div><div class="a" style="left:173px;top:241px;width:15px;height:24px;background:#f0f0f0"></div><div class="a" style="left:173px;top:241px;width:15px;height:1px;background:#fff"></div><div class="a" style="left:173px;top:241px;width:1px;height:24px;background:#fff"></div><div class="a" style="left:173px;top:264px;width:15px;height:1px;background:#a0a0a0"></div><div class="a" style="left:187px;top:241px;width:1px;height:24px;background:#a0a0a0"></div><div class="a" style="left:173px;top:265px;width:16px;height:1px;background:#000"></div><div class="a" style="left:188px;top:241px;width:1px;height:25px;background:#000"></div><div class="a" style="left:291px;top:241px;width:1px;height:25px;background:#c4c4c4"></div><div class="a" style="left:189px;top:265px;width:103px;height:1px;background:#c4c4c4"></div><div class="a" style="left:457px;top:241px;width:1px;height:25px;background:#c4c4c4"></div><div class="a" style="left:292px;top:265px;width:166px;height:1px;background:#c4c4c4"></div><div class="a" style="left:517px;top:241px;width:1px;height:25px;background:#c4c4c4"></div><div class="a" style="left:458px;top:265px;width:60px;height:1px;background:#c4c4c4"></div><div class="a" style="left:173px;top:266px;width:15px;height:24px;background:#f0f0f0"></div><div class="a" style="left:173px;top:266px;width:15px;height:1px;background:#fff"></div><div class="a" style="left:173px;top:266px;width:1px;height:24px;background:#fff"></div><div class="a" style="left:173px;top:289px;width:15px;height:1px;background:#a0a0a0"></div><div class="a" style="left:187px;top:266px;width:1px;height:24px;background:#a0a0a0"></div><div class="a" style="left:173px;top:290px;width:16px;height:1px;background:#000"></div><div class="a" style="left:188px;top:266px;width:1px;height:25px;background:#000"></div><div class="a" style="left:190px;top:267px;width:99px;height:22px;background:#f4f4f4"></div><div class="a" style="left:291px;top:266px;width:1px;height:25px;background:#c4c4c4"></div><div class="a" style="left:189px;top:290px;width:103px;height:1px;background:#c4c4c4"></div><div class="a" style="left:293px;top:267px;width:162px;height:22px;background:#f4f4f4"></div><div class="a" style="left:457px;top:266px;width:1px;height:25px;background:#c4c4c4"></div><div class="a" style="left:292px;top:290px;width:166px;height:1px;background:#c4c4c4"></div><div class="a" style="left:459px;top:267px;width:56px;height:22px;background:#f4f4f4"></div><div class="a" style="left:517px;top:266px;width:1px;height:25px;background:#c4c4c4"></div><div class="a" style="left:458px;top:290px;width:60px;height:1px;background:#c4c4c4"></div><div class="a t" style="left:195.00px;top:169.00px;font-size:13px;line-height:13px;color:#000;;letter-spacing:0.078px">Nome</div><div class="a t" style="left:298.20px;top:169.00px;font-size:13px;line-height:13px;color:#000;;letter-spacing:0.490px">Sup Form</div><div class="a t" style="left:463.70px;top:169.00px;font-size:13px;line-height:13px;color:#000;letter-spacing:0.5px">Rad Fo</div><div class="a t" style="left:190.50px;top:194.00px;font-size:13px;line-height:13px;color:#fff;letter-spacing:0.5px">Soggiorno</div><div class="a t" style="left:293.00px;top:194.00px;font-size:13px;line-height:13px;color:#000;letter-spacing:1.1px">4.50*3.80</div><div class="a t" style="left:459.00px;top:194.00px;font-size:13px;line-height:13px;color:#000;letter-spacing:1.1px">0.90*1</div><div class="a t" style="left:190.50px;top:219.00px;font-size:13px;line-height:13px;color:#000;letter-spacing:0.5px">Cucina</div><div class="a t" style="left:293.00px;top:219.00px;font-size:13px;line-height:13px;color:#000;letter-spacing:1.1px">3.50*2.50</div><div class="a t" style="left:459.00px;top:219.00px;font-size:13px;line-height:13px;color:#000;letter-spacing:1.1px">0.90*1</div><div class="a t" style="left:190.50px;top:244.00px;font-size:13px;line-height:13px;color:#000;letter-spacing:0.5px">Camera</div><div class="a t" style="left:293.00px;top:244.00px;font-size:13px;line-height:13px;color:#000;letter-spacing:1.1px">4.00*4.00</div><div class="a t" style="left:459.00px;top:244.00px;font-size:13px;line-height:13px;color:#000;letter-spacing:1.1px">0.90*1</div><div class="a t" style="left:190.50px;top:269.00px;font-size:13px;line-height:13px;color:#000;letter-spacing:0.5px">Bagno</div><div class="a t" style="left:293.00px;top:269.00px;font-size:13px;line-height:13px;color:#000;letter-spacing:1.1px">2.55*1.80</div><div class="a t" style="left:459.00px;top:269.00px;font-size:13px;line-height:13px;color:#000;letter-spacing:1.1px">0.90*0</div><div class="a" style="left:173px;top:602px;width:332px;height:16px;background:#f0f0f0"></div><div class="a" style="left:190px;top:602px;width:17px;height:15px;background:#cdcdcd"></div><svg class="a" style="left:176px;top:605px" width="10" height="10" viewBox="0 0 10 10"><path d="M8.3 1.8L3.2 5L8.3 8.2" fill="none" stroke="#505050" stroke-width="2.1"/></svg><svg class="a" style="left:492px;top:605px" width="10" height="10" viewBox="0 0 10 10"><path d="M1.7 1.8L6.8 5L1.7 8.2" fill="none" stroke="#505050" stroke-width="2.1"/></svg></div></div><div class="a" style="left:512px;top:162px;width:511px;height:1px;background:#fff"></div><div class="a" style="left:512px;top:162px;width:1px;height:458px;background:#fff"></div><div class="a" style="left:1022px;top:162px;width:1px;height:458px;background:#a0a0a0"></div><div class="a" style="left:1023px;top:162px;width:1px;height:459px;background:#6e6e6e"></div><div class="a" style="left:512px;top:619px;width:511px;height:1px;background:#a0a0a0"></div><div class="a" style="left:512px;top:620px;width:512px;height:1px;background:#6e6e6e"></div><div class="a" style="left:515px;top:141px;width:86px;height:1px;background:#fff"></div><div class="a" style="left:514px;top:142px;width:1px;height:20px;background:#fff"></div><div class="a" style="left:601px;top:142px;width:1px;height:20px;background:#e3e3e3"></div><div class="a" style="left:602px;top:139px;width:111px;height:24px;background:#f0f0f0"></div><div class="a" style="left:603px;top:139px;width:108px;height:1px;background:#fff"></div><div class="a" style="left:602px;top:140px;width:1px;height:23px;background:#fff"></div><div class="a" style="left:711px;top:140px;width:1px;height:23px;background:#a0a0a0"></div><div class="a" style="left:712px;top:141px;width:1px;height:22px;background:#6e6e6e"></div><svg class="a" style="left:520.3px;top:144.3px" width="16" height="16" viewBox="-8 -8 16 16"><circle r="6.4" fill="url(#gs)"/></svg><svg class="a" style="left:609.2px;top:142.2px" width="16" height="16" viewBox="-8 -8 16 16"><circle r="6.4" fill="url(#gs)"/></svg><div class="a t" style="left:542.00px;top:146.00px;font-size:13px;line-height:13px;color:#000;;letter-spacing:0.586px">Porzione</div><div class="a t" style="left:631.50px;top:144.00px;font-size:13px;line-height:13px;color:#000;;letter-spacing:0.785px">Coefficienti</div><div class="a" style="left:516px;top:166px;width:504px;height:1px;background:#a0a0a0"></div><div class="a" style="left:517px;top:167px;width:502px;height:1px;background:#6e6e6e"></div><div class="a" style="left:516px;top:166px;width:1px;height:452px;background:#a0a0a0"></div><div class="a" style="left:517px;top:167px;width:1px;height:450px;background:#6e6e6e"></div><div class="a" style="left:516px;top:617px;width:504px;height:1px;background:#fff"></div><div class="a" style="left:517px;top:616px;width:502px;height:1px;background:#e3e3e3"></div><div class="a" style="left:1019px;top:166px;width:1px;height:452px;background:#fff"></div><div class="a" style="left:1018px;top:167px;width:1px;height:450px;background:#e3e3e3"></div><div class="a" style="left:518px;top:168px;width:500px;height:448px;overflow:hidden"><div class="a" style="left:-518px;top:-168px;width:1029px;height:693px"><div class="a" style="left:518px;top:168px;width:500px;height:448px;background:#fff"></div><div class="a" style="left:518px;top:168px;width:15px;height:24px;background:#f0f0f0"></div><div class="a" style="left:518px;top:168px;width:15px;height:1px;background:#fff"></div><div class="a" style="left:518px;top:168px;width:1px;height:24px;background:#fff"></div><div class="a" style="left:518px;top:191px;width:15px;height:1px;background:#a0a0a0"></div><div class="a" style="left:532px;top:168px;width:1px;height:24px;background:#a0a0a0"></div><div class="a" style="left:518px;top:192px;width:16px;height:1px;background:#000"></div><div class="a" style="left:533px;top:168px;width:1px;height:25px;background:#000"></div><div class="a" style="left:534px;top:168px;width:242px;height:24px;background:#f0f0f0"></div><div class="a" style="left:534px;top:168px;width:242px;height:1px;background:#fff"></div><div class="a" style="left:534px;top:168px;width:1px;height:24px;background:#fff"></div><div class="a" style="left:534px;top:191px;width:242px;height:1px;background:#a0a0a0"></div><div class="a" style="left:775px;top:168px;width:1px;height:24px;background:#a0a0a0"></div><div class="a" style="left:534px;top:192px;width:243px;height:1px;background:#000"></div><div class="a" style="left:776px;top:168px;width:1px;height:25px;background:#000"></div><div class="a" style="left:777px;top:168px;width:152px;height:24px;background:#f0f0f0"></div><div class="a" style="left:777px;top:168px;width:152px;height:1px;background:#fff"></div><div class="a" style="left:777px;top:168px;width:1px;height:24px;background:#fff"></div><div class="a" style="left:777px;top:191px;width:152px;height:1px;background:#a0a0a0"></div><div class="a" style="left:928px;top:168px;width:1px;height:24px;background:#a0a0a0"></div><div class="a" style="left:777px;top:192px;width:153px;height:1px;background:#000"></div><div class="a" style="left:929px;top:168px;width:1px;height:25px;background:#000"></div><div class="a" style="left:930px;top:168px;width:80px;height:24px;background:#f0f0f0"></div><div class="a" style="left:930px;top:168px;width:80px;height:1px;background:#fff"></div><div class="a" style="left:930px;top:168px;width:1px;height:24px;background:#fff"></div><div class="a" style="left:930px;top:191px;width:80px;height:1px;background:#a0a0a0"></div><div class="a" style="left:1009px;top:168px;width:1px;height:24px;background:#a0a0a0"></div><div class="a" style="left:930px;top:192px;width:81px;height:1px;background:#000"></div><div class="a" style="left:1010px;top:168px;width:1px;height:25px;background:#000"></div><div class="a" style="left:1011px;top:168px;width:29px;height:24px;background:#f0f0f0"></div><div class="a" style="left:1011px;top:168px;width:29px;height:1px;background:#fff"></div><div class="a" style="left:1011px;top:168px;width:1px;height:24px;background:#fff"></div><div class="a" style="left:1011px;top:191px;width:29px;height:1px;background:#a0a0a0"></div><div class="a" style="left:1039px;top:168px;width:1px;height:24px;background:#a0a0a0"></div><div class="a" style="left:1011px;top:192px;width:30px;height:1px;background:#000"></div><div class="a" style="left:1040px;top:168px;width:1px;height:25px;background:#000"></div><div class="a" style="left:518px;top:193px;width:15px;height:24px;background:#f0f0f0"></div><div class="a" style="left:518px;top:193px;width:15px;height:1px;background:#fff"></div><div class="a" style="left:518px;top:193px;width:1px;height:24px;background:#fff"></div><div class="a" style="left:518px;top:216px;width:15px;height:1px;background:#a0a0a0"></div><div class="a" style="left:532px;top:193px;width:1px;height:24px;background:#a0a0a0"></div><div class="a" style="left:518px;top:217px;width:16px;height:1px;background:#000"></div><div class="a" style="left:533px;top:193px;width:1px;height:25px;background:#000"></div><div class="a" style="left:534px;top:193px;width:242px;height:24px;background:#3399ff"></div><div class="a" style="left:776px;top:193px;width:1px;height:25px;background:#c4c4c4"></div><div class="a" style="left:534px;top:217px;width:243px;height:1px;background:#e6e3e0"></div><div class="a" style="left:929px;top:193px;width:1px;height:25px;background:#c4c4c4"></div><div class="a" style="left:777px;top:217px;width:153px;height:1px;background:#c4c4c4"></div><div class="a" style="left:1010px;top:193px;width:1px;height:25px;background:#c4c4c4"></div><div class="a" style="left:930px;top:217px;width:81px;height:1px;background:#c4c4c4"></div><div class="a" style="left:1040px;top:193px;width:1px;height:25px;background:#c4c4c4"></div><div class="a" style="left:1011px;top:217px;width:30px;height:1px;background:#c4c4c4"></div><div class="a" style="left:518px;top:218px;width:15px;height:24px;background:#f0f0f0"></div><div class="a" style="left:518px;top:218px;width:15px;height:1px;background:#fff"></div><div class="a" style="left:518px;top:218px;width:1px;height:24px;background:#fff"></div><div class="a" style="left:518px;top:241px;width:15px;height:1px;background:#a0a0a0"></div><div class="a" style="left:532px;top:218px;width:1px;height:24px;background:#a0a0a0"></div><div class="a" style="left:518px;top:242px;width:16px;height:1px;background:#000"></div><div class="a" style="left:533px;top:218px;width:1px;height:25px;background:#000"></div><div class="a" style="left:535px;top:219px;width:239px;height:22px;background:#f4f4f4"></div><div class="a" style="left:776px;top:218px;width:1px;height:25px;background:#c4c4c4"></div><div class="a" style="left:534px;top:242px;width:243px;height:1px;background:#c4c4c4"></div><div class="a" style="left:778px;top:219px;width:149px;height:22px;background:#f4f4f4"></div><div class="a" style="left:929px;top:218px;width:1px;height:25px;background:#c4c4c4"></div><div class="a" style="left:777px;top:242px;width:153px;height:1px;background:#c4c4c4"></div><div class="a" style="left:931px;top:219px;width:77px;height:22px;background:#f4f4f4"></div><div class="a" style="left:1010px;top:218px;width:1px;height:25px;background:#c4c4c4"></div><div class="a" style="left:930px;top:242px;width:81px;height:1px;background:#c4c4c4"></div><div class="a" style="left:1012px;top:219px;width:26px;height:22px;background:#f4f4f4"></div><div class="a" style="left:1040px;top:218px;width:1px;height:25px;background:#c4c4c4"></div><div class="a" style="left:1011px;top:242px;width:30px;height:1px;background:#c4c4c4"></div><div class="a" style="left:518px;top:243px;width:15px;height:24px;background:#f0f0f0"></div><div class="a" style="left:518px;top:243px;width:15px;height:1px;background:#fff"></div><div class="a" style="left:518px;top:243px;width:1px;height:24px;background:#fff"></div><div class="a" style="left:518px;top:266px;width:15px;height:1px;background:#a0a0a0"></div><div class="a" style="left:532px;top:243px;width:1px;height:24px;background:#a0a0a0"></div><div class="a" style="left:518px;top:267px;width:16px;height:1px;background:#000"></div><div class="a" style="left:533px;top:243px;width:1px;height:25px;background:#000"></div><div class="a" style="left:776px;top:243px;width:1px;height:25px;background:#c4c4c4"></div><div class="a" style="left:534px;top:267px;width:243px;height:1px;background:#c4c4c4"></div><div class="a" style="left:929px;top:243px;width:1px;height:25px;background:#c4c4c4"></div><div class="a" style="left:777px;top:267px;width:153px;height:1px;background:#c4c4c4"></div><div class="a" style="left:1010px;top:243px;width:1px;height:25px;background:#c4c4c4"></div><div class="a" style="left:930px;top:267px;width:81px;height:1px;background:#c4c4c4"></div><div class="a" style="left:1040px;top:243px;width:1px;height:25px;background:#c4c4c4"></div><div class="a" style="left:1011px;top:267px;width:30px;height:1px;background:#c4c4c4"></div><div class="a" style="left:518px;top:268px;width:15px;height:24px;background:#f0f0f0"></div><div class="a" style="left:518px;top:268px;width:15px;height:1px;background:#fff"></div><div class="a" style="left:518px;top:268px;width:1px;height:24px;background:#fff"></div><div class="a" style="left:518px;top:291px;width:15px;height:1px;background:#a0a0a0"></div><div class="a" style="left:532px;top:268px;width:1px;height:24px;background:#a0a0a0"></div><div class="a" style="left:518px;top:292px;width:16px;height:1px;background:#000"></div><div class="a" style="left:533px;top:268px;width:1px;height:25px;background:#000"></div><div class="a" style="left:535px;top:269px;width:239px;height:22px;background:#f4f4f4"></div><div class="a" style="left:776px;top:268px;width:1px;height:25px;background:#c4c4c4"></div><div class="a" style="left:534px;top:292px;width:243px;height:1px;background:#c4c4c4"></div><div class="a" style="left:778px;top:269px;width:149px;height:22px;background:#f4f4f4"></div><div class="a" style="left:929px;top:268px;width:1px;height:25px;background:#c4c4c4"></div><div class="a" style="left:777px;top:292px;width:153px;height:1px;background:#c4c4c4"></div><div class="a" style="left:931px;top:269px;width:77px;height:22px;background:#f4f4f4"></div><div class="a" style="left:1010px;top:268px;width:1px;height:25px;background:#c4c4c4"></div><div class="a" style="left:930px;top:292px;width:81px;height:1px;background:#c4c4c4"></div><div class="a" style="left:1012px;top:269px;width:26px;height:22px;background:#f4f4f4"></div><div class="a" style="left:1040px;top:268px;width:1px;height:25px;background:#c4c4c4"></div><div class="a" style="left:1011px;top:292px;width:30px;height:1px;background:#c4c4c4"></div><div class="a" style="left:518px;top:293px;width:15px;height:24px;background:#f0f0f0"></div><div class="a" style="left:518px;top:293px;width:15px;height:1px;background:#fff"></div><div class="a" style="left:518px;top:293px;width:1px;height:24px;background:#fff"></div><div class="a" style="left:518px;top:316px;width:15px;height:1px;background:#a0a0a0"></div><div class="a" style="left:532px;top:293px;width:1px;height:24px;background:#a0a0a0"></div><div class="a" style="left:518px;top:317px;width:16px;height:1px;background:#000"></div><div class="a" style="left:533px;top:293px;width:1px;height:25px;background:#000"></div><div class="a" style="left:776px;top:293px;width:1px;height:25px;background:#c4c4c4"></div><div class="a" style="left:534px;top:317px;width:243px;height:1px;background:#c4c4c4"></div><div class="a" style="left:929px;top:293px;width:1px;height:25px;background:#c4c4c4"></div><div class="a" style="left:777px;top:317px;width:153px;height:1px;background:#c4c4c4"></div><div class="a" style="left:1010px;top:293px;width:1px;height:25px;background:#c4c4c4"></div><div class="a" style="left:930px;top:317px;width:81px;height:1px;background:#c4c4c4"></div><div class="a" style="left:1040px;top:293px;width:1px;height:25px;background:#c4c4c4"></div><div class="a" style="left:1011px;top:317px;width:30px;height:1px;background:#c4c4c4"></div><div class="a" style="left:518px;top:318px;width:15px;height:24px;background:#f0f0f0"></div><div class="a" style="left:518px;top:318px;width:15px;height:1px;background:#fff"></div><div class="a" style="left:518px;top:318px;width:1px;height:24px;background:#fff"></div><div class="a" style="left:518px;top:341px;width:15px;height:1px;background:#a0a0a0"></div><div class="a" style="left:532px;top:318px;width:1px;height:24px;background:#a0a0a0"></div><div class="a" style="left:518px;top:342px;width:16px;height:1px;background:#000"></div><div class="a" style="left:533px;top:318px;width:1px;height:25px;background:#000"></div><div class="a" style="left:535px;top:319px;width:239px;height:22px;background:#f4f4f4"></div><div class="a" style="left:776px;top:318px;width:1px;height:25px;background:#c4c4c4"></div><div class="a" style="left:534px;top:342px;width:243px;height:1px;background:#c4c4c4"></div><div class="a" style="left:778px;top:319px;width:149px;height:22px;background:#f4f4f4"></div><div class="a" style="left:929px;top:318px;width:1px;height:25px;background:#c4c4c4"></div><div class="a" style="left:777px;top:342px;width:153px;height:1px;background:#c4c4c4"></div><div class="a" style="left:931px;top:319px;width:77px;height:22px;background:#f4f4f4"></div><div class="a" style="left:1010px;top:318px;width:1px;height:25px;background:#c4c4c4"></div><div class="a" style="left:930px;top:342px;width:81px;height:1px;background:#c4c4c4"></div><div class="a" style="left:1012px;top:319px;width:26px;height:22px;background:#f4f4f4"></div><div class="a" style="left:1040px;top:318px;width:1px;height:25px;background:#c4c4c4"></div><div class="a" style="left:1011px;top:342px;width:30px;height:1px;background:#c4c4c4"></div><div class="a" style="left:518px;top:343px;width:15px;height:24px;background:#f0f0f0"></div><div class="a" style="left:518px;top:343px;width:15px;height:1px;background:#fff"></div><div class="a" style="left:518px;top:343px;width:1px;height:24px;background:#fff"></div><div class="a" style="left:518px;top:366px;width:15px;height:1px;background:#a0a0a0"></div><div class="a" style="left:532px;top:343px;width:1px;height:24px;background:#a0a0a0"></div><div class="a" style="left:518px;top:367px;width:16px;height:1px;background:#000"></div><div class="a" style="left:533px;top:343px;width:1px;height:25px;background:#000"></div><div class="a" style="left:776px;top:343px;width:1px;height:25px;background:#c4c4c4"></div><div class="a" style="left:534px;top:367px;width:243px;height:1px;background:#c4c4c4"></div><div class="a" style="left:929px;top:343px;width:1px;height:25px;background:#c4c4c4"></div><div class="a" style="left:777px;top:367px;width:153px;height:1px;background:#c4c4c4"></div><div class="a" style="left:1010px;top:343px;width:1px;height:25px;background:#c4c4c4"></div><div class="a" style="left:930px;top:367px;width:81px;height:1px;background:#c4c4c4"></div><div class="a" style="left:1040px;top:343px;width:1px;height:25px;background:#c4c4c4"></div><div class="a" style="left:1011px;top:367px;width:30px;height:1px;background:#c4c4c4"></div><div class="a t" style="left:540.40px;top:171.00px;font-size:13px;line-height:13px;color:#000;;letter-spacing:0.798px">Coefficiente</div><div class="a t" style="left:783.50px;top:171.00px;font-size:13px;line-height:13px;color:#000;;letter-spacing:0.808px">Valore Coefficiente</div><div class="a t" style="left:935.70px;top:171.00px;font-size:13px;line-height:13px;color:#000;;letter-spacing:0.387px">Formula</div><div class="a t" style="left:535.40px;top:196.00px;font-size:13px;line-height:13px;color:#fff;font-style:italic;letter-spacing:0.85px">a) destinazione</div><div class="a t" style="left:778.30px;top:196.00px;font-size:13px;line-height:13px;color:#000;font-style:italic;letter-spacing:0.85px">Camere</div><div class="a t" style="left:931.00px;top:196.00px;font-size:13px;line-height:13px;color:#000;letter-spacing:1.1px">1</div><div class="a t" style="left:535.40px;top:221.00px;font-size:13px;line-height:13px;color:#000;font-style:italic;letter-spacing:0.85px">b) piano</div><div class="a t" style="left:778.30px;top:221.00px;font-size:13px;line-height:13px;color:#000;font-style:italic;letter-spacing:0.85px">Piano &gt;1</div><div class="a t" style="left:931.00px;top:221.00px;font-size:13px;line-height:13px;color:#000;letter-spacing:1.1px">0.9</div><div class="a t" style="left:535.40px;top:246.00px;font-size:13px;line-height:13px;color:#000;font-style:italic;letter-spacing:0.85px">c) orientamento</div><div class="a t" style="left:778.30px;top:246.00px;font-size:13px;line-height:13px;color:#000;font-style:italic;letter-spacing:0.85px">Ovest</div><div class="a t" style="left:931.00px;top:246.00px;font-size:13px;line-height:13px;color:#000;letter-spacing:1.1px">0.98</div><div class="a t" style="left:535.40px;top:271.00px;font-size:13px;line-height:13px;color:#000;font-style:italic;letter-spacing:0.85px">d) prospetto</div><div class="a t" style="left:778.30px;top:271.00px;font-size:13px;line-height:13px;color:#000;font-style:italic;letter-spacing:0.85px">Su giardini, vedute</div><div class="a t" style="left:931.00px;top:271.00px;font-size:13px;line-height:13px;color:#000;letter-spacing:1.1px">0.95</div><div class="a t" style="left:535.40px;top:296.00px;font-size:13px;line-height:13px;color:#000;font-style:italic;letter-spacing:0.85px">e) luminosità</div><div class="a t" style="left:778.30px;top:296.00px;font-size:13px;line-height:13px;color:#000;font-style:italic;letter-spacing:0.85px">K &gt;= 1/6</div><div class="a t" style="left:931.00px;top:296.00px;font-size:13px;line-height:13px;color:#000;letter-spacing:1.1px">1</div><div class="a t" style="left:535.40px;top:321.00px;font-size:13px;line-height:13px;color:#000;font-style:italic;letter-spacing:0.85px">g) isolamento</div><div class="a t" style="left:778.30px;top:321.00px;font-size:13px;line-height:13px;color:#000;font-style:italic;letter-spacing:0.85px">Piani intermedi</div><div class="a t" style="left:931.00px;top:321.00px;font-size:13px;line-height:13px;color:#000;letter-spacing:1.1px">0.95</div><div class="a t" style="left:535.40px;top:346.00px;font-size:13px;line-height:13px;color:#000;font-style:italic;letter-spacing:0.85px">h) efficienza radiante</div><div class="a t" style="left:778.30px;top:346.00px;font-size:13px;line-height:13px;color:#000;font-style:italic;letter-spacing:0.85px">Buona</div><div class="a t" style="left:931.00px;top:346.00px;font-size:13px;line-height:13px;color:#000;letter-spacing:1.1px">1</div><div class="a" style="left:776px;top:268px;width:153px;height:24px;overflow:hidden"><div class="a t" style="left:2.30px;top:18.00px;font-size:13px;line-height:13px;color:#000;font-style:italic;letter-spacing:0.85px">panoramiche, strade</div></div><div class="a" style="left:518px;top:599px;width:500px;height:16px;background:#f0f0f0"></div><div class="a" style="left:535px;top:599px;width:17px;height:15px;background:#cdcdcd"></div><svg class="a" style="left:521px;top:602px" width="10" height="10" viewBox="0 0 10 10"><path d="M8.3 1.8L3.2 5L8.3 8.2" fill="none" stroke="#505050" stroke-width="2.1"/></svg><svg class="a" style="left:1005px;top:602px" width="10" height="10" viewBox="0 0 10 10"><path d="M1.7 1.8L6.8 5L1.7 8.2" fill="none" stroke="#505050" stroke-width="2.1"/></svg></div></div><div class="a" style="left:2px;top:623px;width:146px;height:1px;background:#fff"></div><div class="a" style="left:2px;top:623px;width:1px;height:65px;background:#fff"></div><div class="a" style="left:148px;top:623px;width:1px;height:65px;background:#a0a0a0"></div><div class="a" style="left:149px;top:623px;width:1px;height:67px;background:#6e6e6e"></div><div class="a" style="left:2px;top:688px;width:147px;height:1px;background:#a0a0a0"></div><div class="a" style="left:2px;top:689px;width:148px;height:1px;background:#6e6e6e"></div><div class="a" style="left:2px;top:690px;width:148px;height:1px;background:#fff"></div><div class="a" style="left:2px;top:691px;width:148px;height:1px;background:#f8f8f8"></div><svg class="a" style="left:12.60px;top:627.60px" width="60" height="60" viewBox="-30.0 -30.0 60 60">
<circle r="27.1" fill="none" stroke="#a6dcdf" stroke-width="1.1" stroke-dasharray="1.6 1.4"/>
<circle r="26.3" fill="none" stroke="#fdfefe" stroke-width="1.2"/>
<circle r="25.6" fill="url(#gb)" stroke="url(#gr)" stroke-width="1.1"/>
<circle r="24.6" fill="none" stroke="#a8d6ee" stroke-width="0.9" opacity="0.6"/>
<g fill="#fff"><path d="M-18.7 -7L-17.4 -7L-17.1 -12L-16.8 -7L-13.7 -7L-13.4 -12.5L-13 -9.5L-11.8 -9.5L-11.8 -7L-7.8 -7L-7.8 -1.6L-4.7 -1.6L-4.7 -17.7L-4.3 -17.7L-4.2 -20.7L-3.8 -17.7L-0.3 -17.7L-0.1 -20.7L0.3 -17.7L1.9 -17.7L1.9 -4.6L7.2 -4.6L7.5 -6L7.9 -4.6L9.1 -4.6L9.1 -7L11.3 -7L11.6 -9.5L11.9 -7L13.4 -7L13.8 -12.8L14.2 -7L16.6 -7L16.6 10.2L-18.7 10.2Z"/></g>
</svg><div class="a t" style="left:79.30px;top:650.00px;font-size:13px;line-height:13px;color:#000;;letter-spacing:0.570px">condomini</div><div class="a" style="left:150px;top:623px;width:120px;height:1px;background:#fff"></div><div class="a" style="left:150px;top:623px;width:1px;height:65px;background:#fff"></div><div class="a" style="left:270px;top:623px;width:1px;height:65px;background:#a0a0a0"></div><div class="a" style="left:271px;top:623px;width:1px;height:67px;background:#6e6e6e"></div><div class="a" style="left:150px;top:688px;width:121px;height:1px;background:#a0a0a0"></div><div class="a" style="left:150px;top:689px;width:122px;height:1px;background:#6e6e6e"></div><div class="a" style="left:150px;top:690px;width:122px;height:1px;background:#fff"></div><div class="a" style="left:150px;top:691px;width:122px;height:1px;background:#f8f8f8"></div><svg class="a" style="left:159.60px;top:627.60px" width="60" height="60" viewBox="-30.0 -30.0 60 60">
<circle r="27.1" fill="none" stroke="#a6dcdf" stroke-width="1.1" stroke-dasharray="1.6 1.4"/>
<circle r="26.3" fill="none" stroke="#fdfefe" stroke-width="1.2"/>
<circle r="25.6" fill="url(#gb)" stroke="url(#gr)" stroke-width="1.1"/>
<circle r="24.6" fill="none" stroke="#a8d6ee" stroke-width="0.9" opacity="0.6"/>
<g fill="#fff"><text x="-19.6" y="5.9" font-family="Liberation Sans" font-size="26.5" letter-spacing="2.2" fill="#fff" stroke="#fff" stroke-width="0.5">x0.</text></g>
</svg><div class="a t" style="left:226.30px;top:650.00px;font-size:13px;line-height:13px;color:#000;;letter-spacing:1.073px">coeff.</div><div class="a" style="left:272px;top:623px;width:131px;height:1px;background:#fff"></div><div class="a" style="left:272px;top:623px;width:1px;height:65px;background:#fff"></div><div class="a" style="left:403px;top:623px;width:1px;height:65px;background:#a0a0a0"></div><div class="a" style="left:404px;top:623px;width:1px;height:67px;background:#6e6e6e"></div><div class="a" style="left:272px;top:688px;width:132px;height:1px;background:#a0a0a0"></div><div class="a" style="left:272px;top:689px;width:133px;height:1px;background:#6e6e6e"></div><div class="a" style="left:272px;top:690px;width:133px;height:1px;background:#fff"></div><div class="a" style="left:272px;top:691px;width:133px;height:1px;background:#f8f8f8"></div><svg class="a" style="left:280.60px;top:627.60px" width="60" height="60" viewBox="-30.0 -30.0 60 60">
<circle r="27.1" fill="none" stroke="#a6dcdf" stroke-width="1.1" stroke-dasharray="1.6 1.4"/>
<circle r="26.3" fill="none" stroke="#fdfefe" stroke-width="1.2"/>
<circle r="25.6" fill="url(#gb)" stroke="url(#gr)" stroke-width="1.1"/>
<circle r="24.6" fill="none" stroke="#a8d6ee" stroke-width="0.9" opacity="0.6"/>
<g fill="#fff"><circle cx="-0.6" cy="-10.7" r="5.9"/><path d="M-6.5 -3.7H5.3V16.4H-6.5Z"/><path d="M-6.5 -3.7H5.3L8.5 -0.5L5.3 2H-6.5L-9.7 -0.5Z"/><path d="M-7 -1L-14.8 6.3" stroke="#fff" stroke-width="5" stroke-linecap="round"/><path d="M5.8 -1L13.8 6.3" stroke="#fff" stroke-width="5" stroke-linecap="round"/></g>
</svg><div class="a t" style="left:347.40px;top:650.00px;font-size:13px;line-height:13px;color:#000;;letter-spacing:0.617px">persone</div><div class="a" style="left:405px;top:623px;width:111px;height:1px;background:#fff"></div><div class="a" style="left:405px;top:623px;width:1px;height:65px;background:#fff"></div><div class="a" style="left:405px;top:688px;width:112px;height:1px;background:#a0a0a0"></div><div class="a" style="left:405px;top:689px;width:113px;height:1px;background:#6e6e6e"></div><div class="a" style="left:405px;top:690px;width:113px;height:1px;background:#fff"></div><div class="a" style="left:405px;top:691px;width:113px;height:1px;background:#f8f8f8"></div><svg class="a" style="left:414.60px;top:627.60px" width="60" height="60" viewBox="-30.0 -30.0 60 60">
<circle r="27.1" fill="none" stroke="#a6dcdf" stroke-width="1.1" stroke-dasharray="1.6 1.4"/>
<circle r="26.3" fill="none" stroke="#fdfefe" stroke-width="1.2"/>
<circle r="25.6" fill="url(#gb)" stroke="url(#gr)" stroke-width="1.1"/>
<circle r="24.6" fill="none" stroke="#a8d6ee" stroke-width="0.9" opacity="0.6"/>
<g fill="#fff"><g fill="none" stroke="#fff" stroke-width="1.3"><path d="M-16.6 -14.4V4.9H-11.3M-11.3 1.6V11.9H15V-14H-12.6M-15.2 -14H-16.6M-11.3 -14V-1.6M-11.3 -4.1H-2.7M1.8 -14V-3.7M1.8 1.6V11.9M6.8 -3.7H15M1.8 2.5H15"/></g></g>
</svg><div class="a t" style="left:481.10px;top:650.00px;font-size:13px;line-height:13px;color:#000;;letter-spacing:0.879px">unità</div><div class="a" style="left:518px;top:621px;width:136px;height:2px;background:#f0f0f0"></div><div class="a" style="left:518px;top:621px;width:1px;height:70px;background:#fff"></div><div class="a" style="left:519px;top:621px;width:1px;height:70px;background:#fafafa"></div><div class="a" style="left:652px;top:622px;width:1px;height:69px;background:#a0a0a0"></div><div class="a" style="left:653px;top:622px;width:1px;height:69px;background:#6e6e6e"></div><div class="a" style="left:518px;top:690px;width:135px;height:1px;background:#a0a0a0"></div><div class="a" style="left:518px;top:691px;width:136px;height:1px;background:#6e6e6e"></div><div class="a" style="left:521px;top:624px;width:130px;height:65px;border:1px dotted #000;box-sizing:border-box"></div><svg class="a" style="left:530.00px;top:629.20px" width="60" height="60" viewBox="-30.0 -30.0 60 60">
<circle r="27.1" fill="none" stroke="#a6dcdf" stroke-width="1.1" stroke-dasharray="1.6 1.4"/>
<circle r="26.3" fill="none" stroke="#fdfefe" stroke-width="1.2"/>
<circle r="25.6" fill="url(#gb)" stroke="url(#gr)" stroke-width="1.1"/>
<circle r="24.6" fill="none" stroke="#a8d6ee" stroke-width="0.9" opacity="0.6"/>
<g fill="#fff"><g fill="none" stroke="#fff" stroke-width="1" opacity="0.3"><path d="M-16.6 -14.4V4.9H-11.3M-11.3 1.6V11.9H15V-14H-12.6M-15.2 -14H-16.6M-11.3 -14V-1.6M-11.3 -4.1H-2.7M1.8 -14V-3.7M1.8 1.6V11.9M6.8 -3.7H15M1.8 2.5H15"/></g><path d="M-1.5 -3.7H-11.7V12.3H1.8V6.5M1.8 3.5V1.2M1.8 -1.5V-2.2" fill="none" stroke="#fff" stroke-width="1.9"/></g>
</svg><div class="a t" style="left:596.10px;top:651.80px;font-size:13px;line-height:13px;color:#000;;letter-spacing:0.609px">porzioni</div><div class="a" style="left:654px;top:623px;width:118px;height:1px;background:#fff"></div><div class="a" style="left:654px;top:623px;width:1px;height:65px;background:#fff"></div><div class="a" style="left:772px;top:623px;width:1px;height:65px;background:#a0a0a0"></div><div class="a" style="left:773px;top:623px;width:1px;height:67px;background:#6e6e6e"></div><div class="a" style="left:654px;top:688px;width:119px;height:1px;background:#a0a0a0"></div><div class="a" style="left:654px;top:689px;width:120px;height:1px;background:#6e6e6e"></div><div class="a" style="left:654px;top:690px;width:120px;height:1px;background:#fff"></div><div class="a" style="left:654px;top:691px;width:120px;height:1px;background:#f8f8f8"></div><svg class="a" style="left:661.60px;top:627.60px" width="60" height="60" viewBox="-30.0 -30.0 60 60">
<circle r="27.1" fill="none" stroke="#a6dcdf" stroke-width="1.1" stroke-dasharray="1.6 1.4"/>
<circle r="26.3" fill="none" stroke="#fdfefe" stroke-width="1.2"/>
<circle r="25.6" fill="url(#gb)" stroke="url(#gr)" stroke-width="1.1"/>
<circle r="24.6" fill="none" stroke="#a8d6ee" stroke-width="0.9" opacity="0.6"/>
<g fill="#fff"><rect x="-12.5" y="-16.4" width="10.9" height="5.7"/><rect x="-4.8" y="-10.7" width="1" height="23.9"/><rect x="0.4" y="-5.1" width="11.1" height="5.7"/><rect x="0.4" y="2.7" width="11.1" height="5.8"/><rect x="0.4" y="10.7" width="11.1" height="5.7"/><rect x="-4.8" y="-3.1" width="5.2" height="1"/><rect x="-4.8" y="5" width="5.2" height="1"/><rect x="-4.8" y="12.7" width="5.2" height="1"/></g>
</svg><div class="a t" style="left:728.80px;top:650.00px;font-size:13px;line-height:13px;color:#000;;letter-spacing:0.577px">gruppi</div><div class="a" style="left:774px;top:623px;width:124px;height:1px;background:#fff"></div><div class="a" style="left:774px;top:623px;width:1px;height:65px;background:#fff"></div><div class="a" style="left:898px;top:623px;width:1px;height:65px;background:#a0a0a0"></div><div class="a" style="left:899px;top:623px;width:1px;height:67px;background:#6e6e6e"></div><div class="a" style="left:774px;top:688px;width:125px;height:1px;background:#a0a0a0"></div><div class="a" style="left:774px;top:689px;width:126px;height:1px;background:#6e6e6e"></div><div class="a" style="left:774px;top:690px;width:126px;height:1px;background:#fff"></div><div class="a" style="left:774px;top:691px;width:126px;height:1px;background:#f8f8f8"></div><svg class="a" style="left:783.40px;top:627.60px" width="60" height="60" viewBox="-30.0 -30.0 60 60">
<circle r="27.1" fill="none" stroke="#a6dcdf" stroke-width="1.1" stroke-dasharray="1.6 1.4"/>
<circle r="26.3" fill="none" stroke="#fdfefe" stroke-width="1.2"/>
<circle r="25.6" fill="url(#gb)" stroke="url(#gr)" stroke-width="1.1"/>
<circle r="24.6" fill="none" stroke="#a8d6ee" stroke-width="0.9" opacity="0.6"/>
<g fill="#fff"><g fill="none" stroke="#fff" stroke-width="1.3"><rect x="-13" y="-13" width="24.3" height="24.6"/><path d="M-6.9 -13V11.6M-0.8 -13V11.6M5.2 -13V11.6M-13 -8.1H11.3M-13 -3.2H11.3M-13 1.7H11.3M-13 6.6H11.3"/></g></g>
</svg><div class="a t" style="left:851.20px;top:650.00px;font-size:13px;line-height:13px;color:#000;;letter-spacing:0.684px">tabelle</div><div class="a" style="left:900px;top:623px;width:109px;height:1px;background:#fff"></div><div class="a" style="left:900px;top:623px;width:1px;height:65px;background:#fff"></div><div class="a" style="left:1009px;top:623px;width:1px;height:65px;background:#a0a0a0"></div><div class="a" style="left:1010px;top:623px;width:1px;height:67px;background:#6e6e6e"></div><div class="a" style="left:900px;top:688px;width:110px;height:1px;background:#a0a0a0"></div><div class="a" style="left:900px;top:689px;width:111px;height:1px;background:#6e6e6e"></div><div class="a" style="left:900px;top:690px;width:111px;height:1px;background:#fff"></div><div class="a" style="left:900px;top:691px;width:111px;height:1px;background:#f8f8f8"></div><svg class="a" style="left:909.20px;top:627.60px" width="60" height="60" viewBox="-30.0 -30.0 60 60">
<circle r="27.1" fill="none" stroke="#a6dcdf" stroke-width="1.1" stroke-dasharray="1.6 1.4"/>
<circle r="26.3" fill="none" stroke="#fdfefe" stroke-width="1.2"/>
<circle r="25.6" fill="url(#gb)" stroke="url(#gr)" stroke-width="1.1"/>
<circle r="24.6" fill="none" stroke="#a8d6ee" stroke-width="0.9" opacity="0.6"/>
<g fill="#fff"><rect x="-11.1" y="-16.5" width="22" height="32.1"/><g stroke="#b4b4b4" stroke-width="0.8" stroke-dasharray="2 0.8"><path d="M-9 -14H8M-10.1 -8.3H9.9M-10.1 -4.2H9.9M-10.1 0H9.9M-10.1 3.9H9.9M-10.1 7.8H8M-10.1 11.9H5"/></g></g>
</svg><div class="a t" style="left:975.60px;top:650.00px;font-size:13px;line-height:13px;color:#000;;letter-spacing:1.180px">doc.</div>
<div class="a" style="left:0;top:0;width:1029px;height:693px;box-sizing:border-box;border:1px solid #5a9a1c;pointer-events:none"></div>
</body></html>
